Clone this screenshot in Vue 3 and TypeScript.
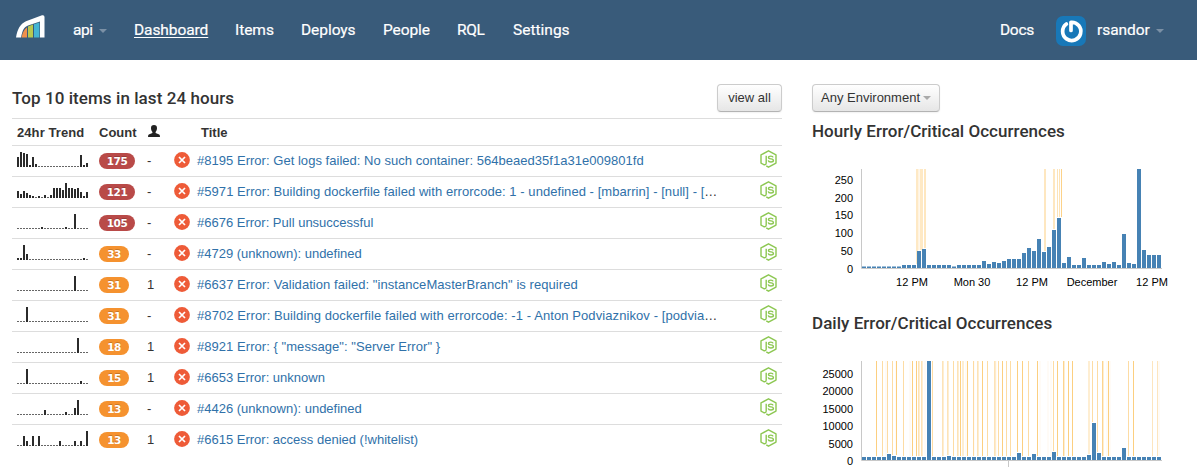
<script setup lang="ts">
interface NavItem { label: string; width: number; spacing: number; active?: boolean; caret?: boolean }
interface Item { bars: number[]; count: number; users: string; title: string; spacing?: number; cut?: boolean }
interface Deploy { x: number; w: number; o: number }
interface Chart {
  name: string; title: string; bars: number[]; deploys: Deploy[]
  yLabels: { text: string; y: number }[]; xLabels: { text: string; x: number }[]; tick?: number
}

const nav: NavItem[] = [
  { label: 'api', width: 33, spacing: -0.4, caret: true },
  { label: 'Dashboard', width: 73, spacing: -0.08, active: true },
  { label: 'Items', width: 38, spacing: -0.05 },
  { label: 'Deploys', width: 54, spacing: -0.05 },
  { label: 'People', width: 46, spacing: -0.1 },
  { label: 'RQL', width: 28, spacing: -0.4 },
  { label: 'Settings', width: 56, spacing: 0 },
]

function trend(peaks: Record<number, number>): number[] {
  return Array.from({ length: 24 }, (_, i) => peaks[i] ?? 1)
}

const items: Item[] = [
  { bars: trend({ 0: 10, 1: 15, 2: 14, 3: 13, 4: 2, 5: 10, 6: 3, 21: 12, 22: 2, 23: 4 }), count: 175, users: '-', spacing: 0.03, title: '#8195 Error: Get logs failed: No such container: 564beaed35f1a31e009801fd' },
  { bars: [7, 4, 7, 5, 3, 2, 1, 2, 1, 3, 1, 3, 10, 10, 10, 8, 15, 10, 10, 9, 10, 6, 2, 6], count: 121, users: '-', spacing: 0.055, title: '#5971 Error: Building dockerfile failed with errorcode: 1 - undefined - [mbarrin] - [null] - [', cut: true },
  { bars: trend({ 8: 2, 16: 2, 19: 15 }), count: 105, users: '-', title: '#6676 Error: Pull unsuccessful' },
  { bars: trend({ 0: 2, 1: 2, 2: 15, 3: 6, 22: 2 }), count: 33, users: '-', title: '#4729 (unknown): undefined' },
  { bars: trend({ 19: 15 }), count: 31, users: '1', spacing: 0.06, title: '#6637 Error: Validation failed: "instanceMasterBranch" is required' },
  { bars: trend({ 3: 15 }), count: 31, users: '-', spacing: 0.09, title: '#8702 Error: Building dockerfile failed with errorcode: -1 - Anton Podviaznikov - [podvia', cut: true },
  { bars: trend({ 20: 15 }), count: 18, users: '1', spacing: 0.05, title: '#8921 Error: { "message": "Server Error" }' },
  { bars: trend({ 3: 15, 21: 3 }), count: 15, users: '1', title: '#6653 Error: unknown' },
  { bars: trend({ 9: 5, 16: 3, 19: 7, 20: 15 }), count: 13, users: '-', title: '#4426 (unknown): undefined' },
  { bars: trend({ 2: 10, 3: 5, 5: 10, 7: 10, 14: 5, 19: 5, 21: 5, 23: 15 }), count: 13, users: '1', title: '#6615 Error: access denied (!whitelist)' },
]

const dailyPeaks: Record<number, number> = { 5: 6, 6: 4, 13: 99, 17: 4, 31: 7, 34: 6, 38: 8, 45: 5, 46: 37, 47: 7, 52: 12 }
const strong = [64, 84, 100, 104, 148, 155, 170, 190, 205, 210, 225, 245, 256, 260, 296, 321]
const medium = [70, 75, 80, 91, 120, 141, 161, 175, 186, 194, 198, 205, 216, 241, 251, 280, 285, 290, 316]
const light = [106, 109, 130, 135, 145, 165, 182, 190, 216, 251, 316, 340, 345]
const wide = [106, 109, 130, 135, 145, 150, 165, 182, 251, 276, 290]
const haze = [73, 83, 97, 112, 153, 161, 183, 227, 235, 238, 294, 297, 346]

const charts: Chart[] = [
  {
    name: 'hourly',
    title: 'Hourly Error/Critical Occurrences',
    bars: [1.5, 1.5, 1.5, 1.5, 1.5, 1.5, 1.5, 1.5, 3, 3, 3, 17, 19, 3, 3, 3, 3, 3, 1.5, 3, 3, 3, 3, 3, 7, 4, 6, 5, 7, 9, 9, 9, 15, 20, 17, 29, 16, 21, 38, 50, 5, 11, 3, 3, 10, 3, 3, 3, 6, 4, 6, 3, 34, 5, 4, 99, 18, 13, 13, 13],
    deploys: [
      { x: 104, w: 2, o: 0.32 }, { x: 106.5, w: 0.8, o: 0.35 }, { x: 108, w: 3, o: 0.32 }, { x: 112, w: 2, o: 0.35 },
      { x: 232, w: 2, o: 0.35 }, { x: 241, w: 2, o: 0.35 }, { x: 245, w: 1, o: 0.4 }, { x: 247, w: 1, o: 0.4 }, { x: 249, w: 1, o: 0.65 },
    ],
    yLabels: [{ text: '250', y: 11 }, { text: '200', y: 29 }, { text: '150', y: 46 }, { text: '100', y: 64 }, { text: '50', y: 82 }, { text: '0', y: 100 }],
    xLabels: [{ text: '12 PM', x: 100 }, { text: 'Mon 30', x: 160 }, { text: '12 PM', x: 220 }, { text: 'December', x: 280 }, { text: '12 PM', x: 340 }],
  },
  {
    name: 'daily',
    title: 'Daily Error/Critical Occurrences',
    bars: Array.from({ length: 60 }, (_, i) => dailyPeaks[i] ?? 3),
    deploys: [
      ...haze.map(x => ({ x, w: 2, o: 0.05 })),
      ...wide.map(x => ({ x, w: 2, o: 0.25 })),
      ...strong.map(x => ({ x, w: 1, o: 0.7 })),
      ...medium.filter(x => !strong.includes(x)).map(x => ({ x, w: 1, o: 0.5 })),
      ...light.filter(x => !strong.includes(x) && !medium.includes(x)).map(x => ({ x, w: 1, o: 0.2 })),
      { x: 340, w: 1, o: 0.2 }, { x: 345, w: 1, o: 0.2 },
    ],
    yLabels: [{ text: '25000', y: 13 }, { text: '20000', y: 30 }, { text: '15000', y: 48 }, { text: '10000', y: 65 }, { text: '5000', y: 83 }, { text: '0', y: 100 }],
    xLabels: [],
    tick: 196,
  },
]

// A deploy marker stops just above whichever bar it crosses.
function markerHeight(bars: number[], x: number): number {
  const i = Math.max(0, Math.floor((x - 50) / 5))
  return 98 - (bars[i] ?? 3)
}
</script>

<template>
  <div class="page">
    <header class="topbar">
      <svg class="logo" width="30" height="23" viewBox="0 0 30 23">
        <path d="M5.500 22.5Q7 15 11 12.500V22.5Z" fill="#f0904c" />
        <path d="M12 22.5V11.500L17 9.500V22.5Z" fill="#b9c84f" />
        <path d="M18 22.5V9.200L23.400 7.500V22.5Z" fill="#45b5d3" />
        <path d="M0 22.500C1.500 14 4 9 10 6.200L26 0.300Q28.500 -0.300 28.500 2V22.500H24V6.500L12 10.500C8 12 6.500 15 5 22.500Z" fill="#fff" />
      </svg>
      <nav class="nav">
        <a v-for="n in nav" :key="n.label" class="nav-item" :class="{ active: n.active }" :style="{ width: n.width + 'px', letterSpacing: n.spacing + 'px' }">
          <span>{{ n.label }}</span><i v-if="n.caret" class="caret"></i>
        </a>
      </nav>
      <div class="account">
        <a class="nav-item docs">Docs</a>
        <svg class="avatar" width="30" height="30" viewBox="0 0 30 30">
          <rect width="30" height="30" rx="7" fill="#1878b8" />
          <path d="M10.400 8A9.100 9.100 0 1 0 15 6.300V14.500" fill="none" stroke="#fff" stroke-width="3.700" stroke-linecap="round" stroke-linejoin="round" />
        </svg>
        <a class="nav-item user"><span>rsandor</span><i class="caret"></i></a>
      </div>
    </header>

    <main class="content">
      <section class="items">
        <div class="items-head">
          <h2 class="title-items">Top 10 items in last 24 hours</h2>
          <button class="btn view-all">view all</button>
        </div>
        <div class="row head">
          <span class="th-trend">24hr Trend</span>
          <span>Count</span>
          <span><svg class="person" width="12" height="12" viewBox="0 0 12 12"><path d="M6 0C8 0 9.100 1.200 9 3.200C8.900 5 8.300 6.200 7.600 6.900V8L11.200 9.500Q12 9.900 12 12H0Q0 9.900 0.800 9.500L4.400 8V6.900C3.700 6.200 3.100 5 3 3.200C2.900 1.200 4 0 6 0Z" fill="#222" /></svg></span>
          <span></span>
          <span class="th-title">Title</span>
          <span></span>
        </div>
        <div v-for="item in items" :key="item.title" class="row">
          <svg class="trend" width="72" height="15" viewBox="0 0 72 15">
            <rect v-for="(h, i) in item.bars" :key="i" :x="i * 3" :y="15 - h" width="2" :height="h" :fill="h === 1 ? '#666' : '#2b2b2b'" />
          </svg>
          <span class="badge" :class="{ hot: item.count > 100 }">{{ item.count }}</span>
          <span class="users">{{ item.users }}</span>
          <svg class="err" width="16" height="16" viewBox="0 0 16 16">
            <circle cx="8" cy="8" r="7.900" fill="#ee5b38" />
            <path d="M5 5L11 11M11 5L5 11" stroke="#fff" stroke-width="1.700" />
          </svg>
          <span class="link" :style="{ letterSpacing: (item.spacing ?? 0) + 'px' }"><a>{{ item.title }}</a><template v-if="item.cut">…</template></span>
          <svg class="node" width="17" height="18" viewBox="0 0 17 18">
            <g fill="none" stroke="#8cc751" stroke-width="1.400" stroke-linejoin="round">
              <path d="M6.300 15.800L8.500 17.200L16 13.100V4.900L8.500 0.800L1 4.900V13.100L3.500 14.500Q6.200 15.400 6.200 12.800V5.800" />
              <path d="M13.100 7.400Q12.800 6.100 10.900 6.100Q8.500 6.100 8.500 7.500Q8.500 8.700 10.900 8.900Q13.400 9.100 13.400 10.500Q13.400 12 10.900 12Q8.500 12 8.200 10.400" />
            </g>
          </svg>
        </div>
      </section>

      <aside class="charts">
        <button class="btn env">Any Environment<i class="caret dark"></i></button>
        <section v-for="c in charts" :key="c.name" class="chart" :class="c.name">
          <h2>{{ c.title }}</h2>
          <svg class="plot" width="360" height="125" viewBox="0 0 360 125">
            <rect v-for="(d, i) in c.deploys" :key="'d' + i" :x="d.x" y="0" :width="d.w" :height="markerHeight(c.bars, d.x)" fill="#fbba4a" :fill-opacity="d.o" />
            <rect v-for="(h, i) in c.bars" :key="'b' + i" :x="50 + i * 5" :y="99 - h" width="4" :height="h" fill="#4682b4" />
            <path d="M49.500 0V99.500H350" fill="none" stroke="#c8c8c8" />
            <path v-if="c.tick" :d="`M${c.tick + 0.5} 100V107`" stroke="#c8c8c8" />
            <text v-for="l in c.yLabels" :key="l.text" x="41" :y="l.y + 4" text-anchor="end">{{ l.text }}</text>
            <text v-for="l in c.xLabels" :key="l.x" :x="l.x" y="117" text-anchor="middle">{{ l.text }}</text>
          </svg>
        </section>
      </aside>
    </main>
  </div>
</template>

<style>
html, body { margin: 0; overflow: hidden; background: #fff; }
</style>

<style scoped>
.page { width: 1197px; height: 467px; overflow: hidden; background: #fff; color: #333; font: 13px/18px "Liberation Sans", sans-serif; }
.topbar { display: flex; height: 60px; box-sizing: border-box; background: #395b7a; padding: 15px 0 0 16px; }
.logo { flex: none; }
.nav { display: flex; gap: 28px; margin-left: 27px; }
.nav-item { display: block; color: #fff; font: 400 15.5px/30px Roboto, sans-serif; white-space: nowrap; -webkit-text-stroke: 0.2px #fff; }
.active { text-decoration: underline; text-underline-offset: 2px; text-decoration-thickness: 1px; }
.caret { display: inline-block; border: 4px solid transparent; border-top-color: #7b90a5; border-bottom: 0; margin-left: 6px; vertical-align: 2px; }
.account { display: flex; margin-left: auto; padding-right: 35px; }
.docs { width: 34px; letter-spacing: -0.3px; }
.avatar { margin: 1px 11px 0 22px; }
.user { width: 65px; letter-spacing: -0.05px; }
.content { display: flex; padding: 24px 0 0 12px; }
.items { width: 770px; margin-right: 30px; }
.items-head { display: flex; justify-content: space-between; height: 34px; }
h2 { margin: 0; font: 500 17px/28px Roboto, sans-serif; color: #333; white-space: nowrap; }
.title-items { letter-spacing: 0.07px; }
.btn { display: block; box-sizing: border-box; height: 28px; padding: 0; border: 1px solid #ccc; border-bottom-color: #b3b3b3; border-radius: 4px; background: linear-gradient(#fff, #e6e6e6); font: 13px/26px "Liberation Sans", sans-serif; color: #333; box-shadow: 0 1px 2px rgba(0,0,0,.06); }
.view-all { width: 65px; }
.env { width: 128px; text-align: left; padding-left: 8px; white-space: nowrap; }
.dark { border-top-color: #aaa; margin-left: 3px; vertical-align: 2px; }
.row { display: grid; grid-template-columns: 82px 43px 32px 23px 563px 17px; padding-left: 5px; height: 30px; border-top: 1px solid #ddd; }
.row.head { height: 26px; line-height: 27px; font-weight: bold; color: #333; }
.th-trend { letter-spacing: 0.08px; }
.th-title { padding-left: 4px; }
.person { display: block; margin: 6px 0 0 6px; }
.trend { margin-top: 6px; }
.badge { width: 30px; height: 16px; margin-top: 7px; border-radius: 8px; background: #f5922f; color: #fff; font: bold 10.5px/16px "DejaVu Sans", sans-serif; letter-spacing: -0.5px; text-align: center; text-shadow: 0 -1px 0 rgba(0,0,0,.2); }
.hot { width: 36px; background: #b94a48; }
.users { padding-left: 5px; line-height: 29px; }
.err { margin-top: 6px; margin-left: 0.4px; }
.link { line-height: 29px; white-space: nowrap; }
.link a { color: #3071a9; }
.node { margin: 4px 0 0 -0.5px; }
.chart h2 { line-height: 20px; }
.hourly h2 { margin-top: 9px; letter-spacing: 0.03px; }
.plot { display: block; margin-top: 28px; }
.plot text { font: 11px "Liberation Sans", sans-serif; fill: #000; }
.daily h2 { margin-top: 19px; letter-spacing: 0.03px; }
</style>
